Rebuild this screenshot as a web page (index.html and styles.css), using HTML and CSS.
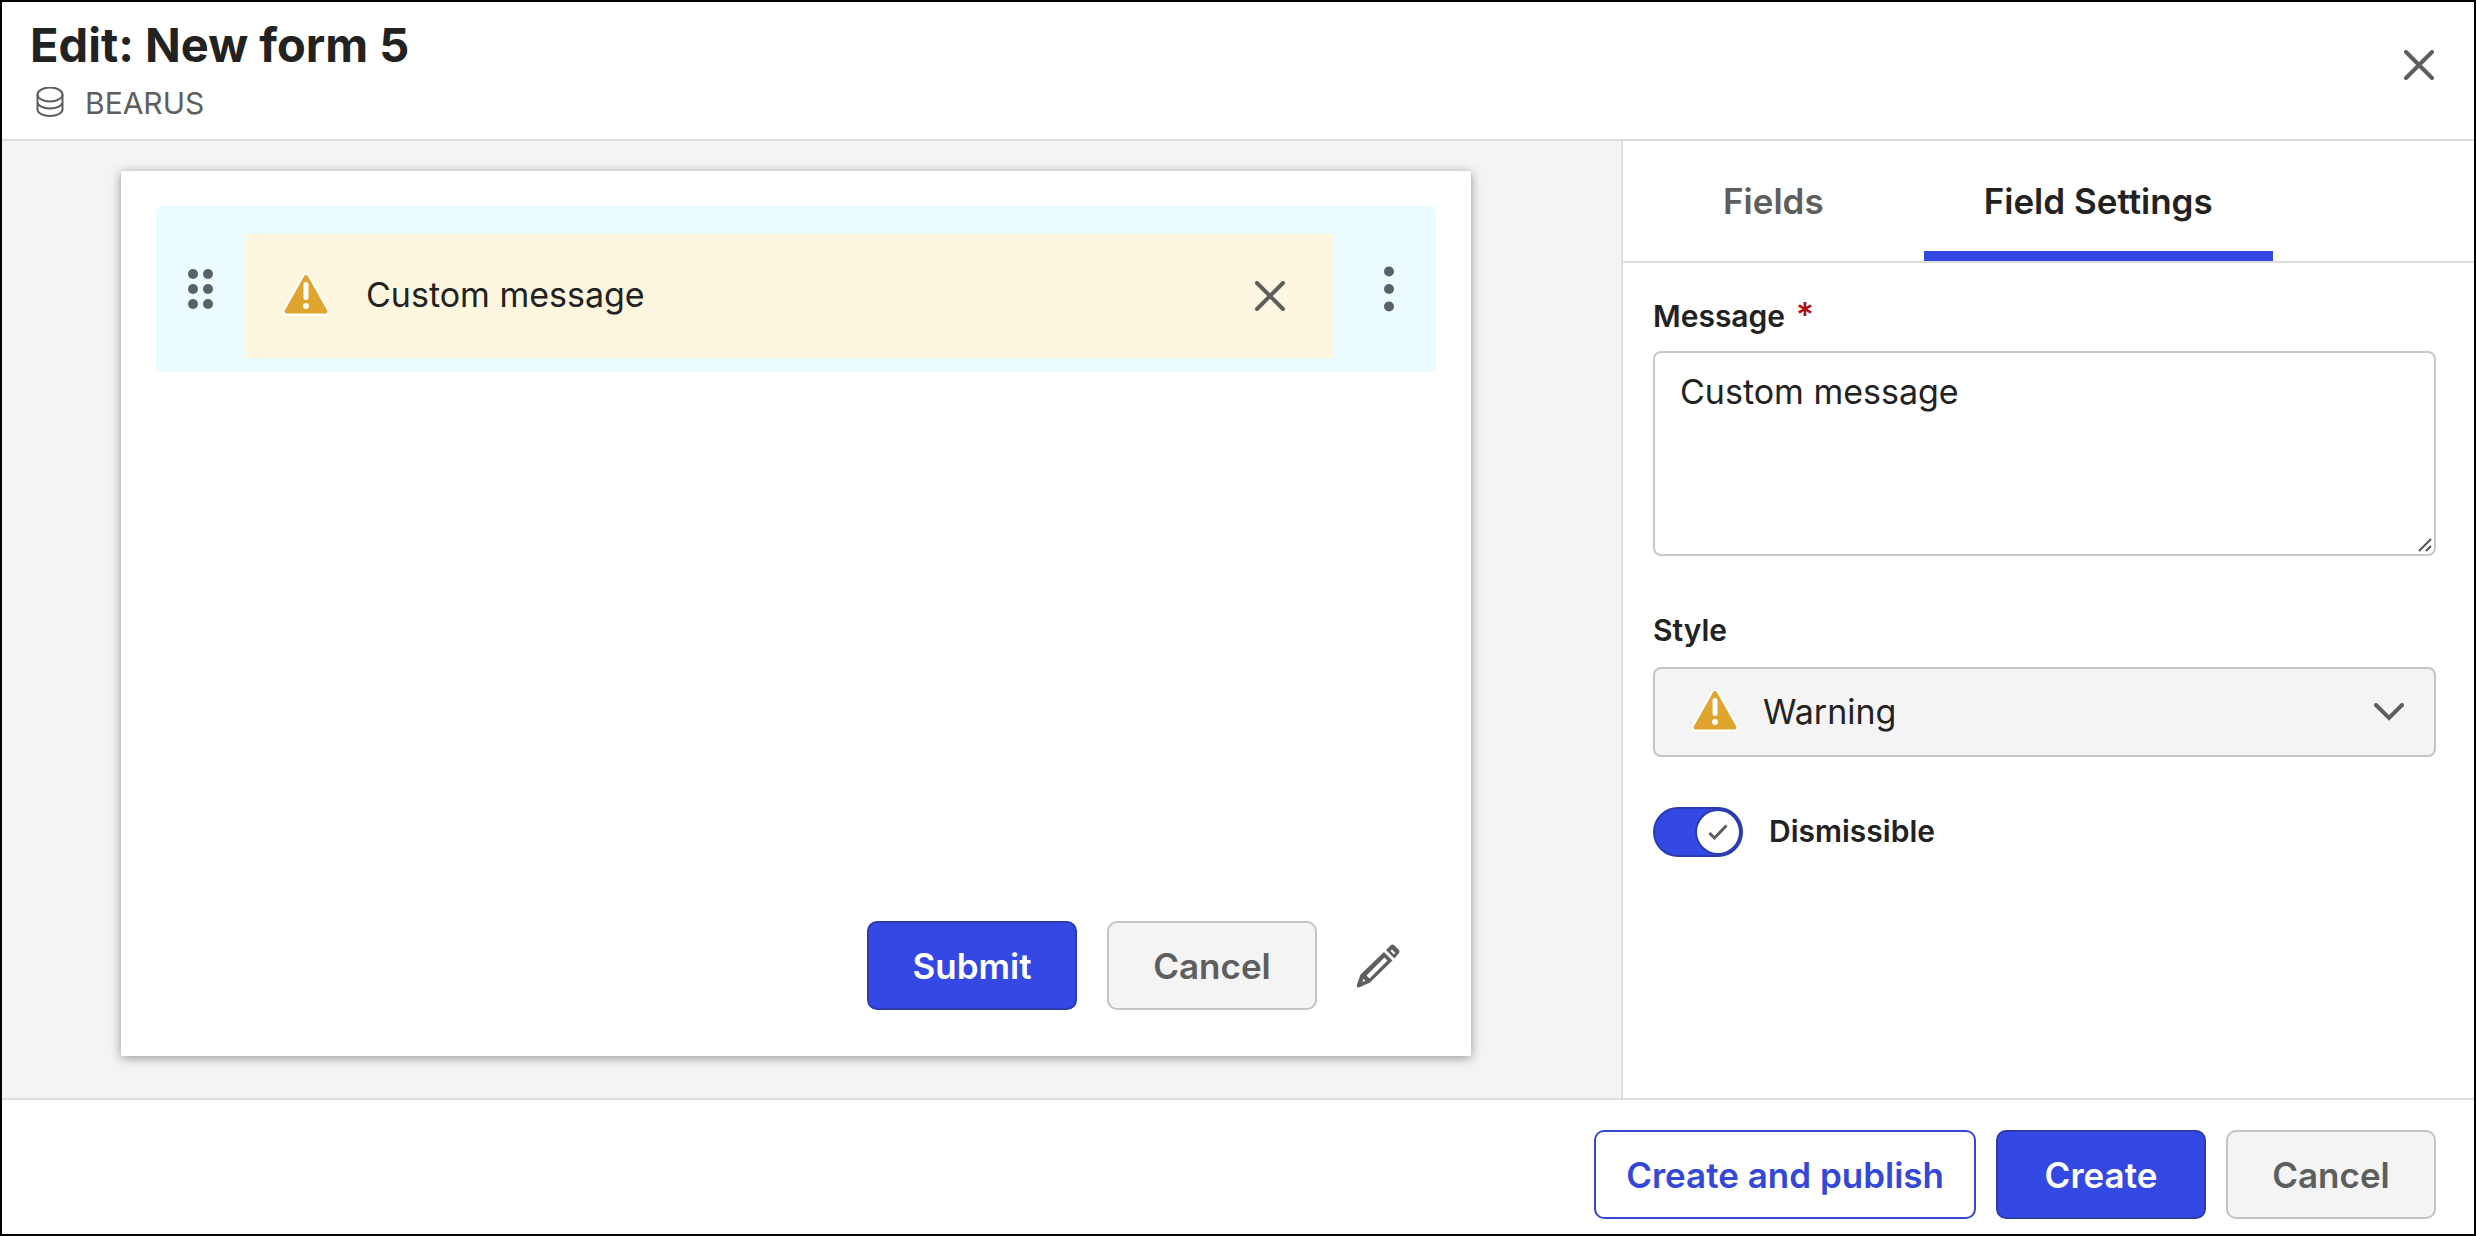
FILE: index.html
```html
<!DOCTYPE html>
<html lang="en">
<head>
<meta charset="utf-8">
<title>Edit: New form 5</title>
<link rel="stylesheet" href="styles.css">
</head>
<body>
<div class="dialog">
  <header class="header">
    <div class="heading">
      <h1 class="title">Edit: New form 5</h1>
      <p class="source">
        <svg class="source-icon" viewBox="0 0 28 32" aria-hidden="true"><ellipse cx="14" cy="7.500" rx="12.500" ry="7"/><path d="M1.500 7.500v15c0 3.600 5.600 6.500 12.500 6.500s12.500-2.900 12.500-6.500v-15M1.500 15c0 3.600 5.600 6.500 12.500 6.500s12.500-2.900 12.500-6.500"/></svg>
        <span>BEARUS</span>
      </p>
    </div>
    <button class="icon-button header-close" type="button" aria-label="Close"><svg class="icon-close" viewBox="0 0 30 30" aria-hidden="true"><path d="M2 2l26 26M28 2L2 28"/></svg></button>
  </header>

  <main class="main">
    <section class="canvas" aria-label="Form preview">
      <div class="card">
        <div class="field-row">
          <button class="icon-button" type="button" aria-label="Move field"><svg class="icon-grip" viewBox="0 0 26 42" aria-hidden="true"><circle cx="5" cy="6" r="5"/><circle cx="20" cy="6" r="5"/><circle cx="5" cy="21" r="5"/><circle cx="20" cy="21" r="5"/><circle cx="5" cy="36" r="5"/><circle cx="20" cy="36" r="5"/></svg></button>
          <div class="alert">
            <svg class="icon-warning" viewBox="0 0 48 44" aria-hidden="true"><path class="warning-halo" d="M24 3L43.500 37.500H4.500z"/><path class="warning-shape" d="M24 3L43.500 37.500H4.500z"/><path class="warning-mark" d="M24 10.500v13"/><circle class="warning-dot" cx="24" cy="32" r="3"/></svg>
            <span class="alert-text">Custom message</span>
            <button class="icon-button" type="button" aria-label="Dismiss"><svg class="icon-close" viewBox="0 0 30 30" aria-hidden="true"><path d="M2 2l26 26M28 2L2 28"/></svg></button>
          </div>
          <button class="icon-button" type="button" aria-label="Field actions"><svg class="icon-more" viewBox="0 0 10 46" aria-hidden="true"><circle cx="5" cy="5.500" r="5"/><circle cx="5" cy="23" r="5"/><circle cx="5" cy="40.500" r="5"/></svg></button>
        </div>
        <div class="card-actions">
          <button class="button button-primary" type="button">Submit</button>
          <button class="button button-secondary" type="button">Cancel</button>
          <button class="icon-button" type="button" aria-label="Edit buttons"><svg class="icon-pencil" viewBox="0 0 44 44" aria-hidden="true"><path fill-rule="evenodd" d="M28 8L36.500 16.500L14 38.500L4 43Q0 44.500 1 40.500L4.500 30.500zM28.500 13.500L10.500 31.500L13.500 34.500L31.500 16.500zM7.500 34.500L6.500 38L9.500 37z"/><path fill-rule="evenodd" d="M30 6L34.500 1.500Q36.500 -.5 38.500 1.500L42.500 5.500Q44.500 7.500 42.500 9.500L38.500 14.500zM36 5.500L34.500 7L38 10.500L39.500 9z"/></svg></button>
        </div>
      </div>
    </section>

    <aside class="panel">
      <div class="tabs" role="tablist">
        <button class="tab" type="button" role="tab" aria-selected="false">Fields</button>
        <button class="tab tab-active" type="button" role="tab" aria-selected="true">Field Settings</button>
      </div>
      <form class="settings">
        <div class="field">
          <label class="label" for="message">Message <span class="required">*</span></label>
          <div class="textarea-box">
            <textarea class="textarea" id="message" required>Custom message</textarea>
            <svg class="resize-mark" viewBox="0 0 14 14" aria-hidden="true"><path d="M1 13L13 1M8 13l5-5"/></svg>
          </div>
        </div>
        <div class="field">
          <label class="label" for="style">Style</label>
          <div class="select-box">
            <svg class="icon-warning" viewBox="0 0 48 44" aria-hidden="true"><path class="warning-halo" d="M24 3L43.500 37.500H4.500z"/><path class="warning-shape" d="M24 3L43.500 37.500H4.500z"/><path class="warning-mark" d="M24 10.500v13"/><circle class="warning-dot" cx="24" cy="32" r="3"/></svg>
            <select class="select" id="style"><option>Warning</option></select>
            <svg class="icon-chevron" viewBox="0 0 30 18" aria-hidden="true"><path d="M2 2l13 13L28 2"/></svg>
          </div>
        </div>
        <label class="switch-row">
          <span class="switch">
            <input class="switch-input" type="checkbox" role="switch" checked>
            <svg class="switch-check" viewBox="0 0 20 16" aria-hidden="true"><path d="M1.500 9l5 5L18.500 1.500"/></svg>
          </span>
          <span class="switch-label">Dismissible</span>
        </label>
      </form>
    </aside>
  </main>

  <footer class="footer">
    <button class="button button-outline" type="button">Create and publish</button>
    <button class="button button-primary" type="button">Create</button>
    <button class="button button-secondary" type="button">Cancel</button>
  </footer>
</div>
</body>
</html>
```
FILE: styles.css
```css
* {
  box-sizing: border-box;
}

body {
  margin: 0;
  font-family: Inter, "Liberation Sans", sans-serif;
  font-size: 34px;
  line-height: 44px;
  color: #222;
}

button,
select,
textarea {
  font: inherit;
  color: inherit;
  margin: 0;
}

svg {
  display: block;
  flex: none;
}

.dialog {
  display: flex;
  flex-direction: column;
  min-height: 100vh;
  border: 2px solid #000;
  background: #fff;
}

/* Header */

.header {
  display: flex;
  align-items: flex-start;
  justify-content: space-between;
  padding: 13px 40px 14px 28px;
  border-bottom: 2px solid #ddd;
}

.title {
  margin: 0;
  font-size: 47px;
  line-height: 60px;
  font-weight: 650;
}

.source {
  display: flex;
  align-items: center;
  gap: 21px;
  margin: 0;
  padding: 6px 0 0 6px;
  font-size: 30px;
  color: #5e5e5e;
}

.source-icon {
  width: 28px;
  height: 32px;
  fill: none;
  stroke: #5e5e5e;
  stroke-width: 2;
}

.icon-button {
  display: flex;
  flex: none;
  padding: 0;
  border: 0;
  background: none;
}

.header-close {
  margin-top: 35px;
}

.icon-close {
  width: 30px;
  height: 30px;
  fill: none;
  stroke: #5e5e5e;
  stroke-width: 4;
  stroke-linecap: round;
}

/* Form preview */

.main {
  display: flex;
  flex: 1;
}

.canvas {
  display: flex;
  flex: 1;
  padding: 30px 150px 42px 119px;
  background: #f4f4f4;
}

.card {
  display: flex;
  flex: 1;
  flex-direction: column;
  justify-content: space-between;
  padding: 35px 35px 46px;
  background: #fff;
  box-shadow: 0 2px 10px rgba(0, 0, 0, 0.4);
}

.field-row {
  display: flex;
  align-items: center;
  padding: 0 42px 0 32px;
  border-radius: 6px;
  background: #ecfbff;
}

.icon-grip {
  width: 26px;
  height: 42px;
  fill: #5a6265;
}

.icon-more {
  width: 10px;
  height: 46px;
  fill: #5a6265;
}

.alert {
  display: flex;
  flex: 1;
  align-items: center;
  margin: 28px 51px 14px 32px;
  padding: 39px 48px 39px 36px;
  background: #fdf6de;
}

.alert-text {
  flex: 1;
  padding: 0 0 2px 36px;
}

.icon-warning {
  width: 48px;
  height: 44px;
}

.warning-halo {
  fill: #fff;
  stroke: #fff;
  stroke-width: 8;
  stroke-linejoin: round;
}

.warning-shape {
  fill: #dfa52f;
  stroke: #dfa52f;
  stroke-width: 4;
  stroke-linejoin: round;
}

.warning-mark {
  stroke: #fff;
  stroke-width: 5;
  stroke-linecap: round;
}

.warning-dot {
  fill: #fff;
}

.card-actions {
  display: flex;
  align-items: center;
  justify-content: flex-end;
  gap: 30px;
  padding-right: 36px;
}

.icon-pencil {
  width: 44px;
  height: 44px;
  margin-left: 9px;
  fill: #5e5e5e;
}

.button {
  min-width: 210px;
  height: 89px;
  padding: 0 30px;
  border: 2px solid;
  border-radius: 10px;
  font-size: 35px;
  font-weight: 600;
}

.button-primary {
  border-color: #2b3bb0;
  background: #3448e4;
  color: #fff;
}

.button-secondary {
  border-color: #c4c4c4;
  background: #f4f4f4;
  color: #5e5e5e;
}

.button-outline {
  border-color: #3448d4;
  background: #fff;
  color: #3448d8;
}

/* Settings panel */

.panel {
  width: 853px;
  border-left: 2px solid #ddd;
}

.tabs {
  display: flex;
  gap: 40px;
  padding-left: 40px;
  border-bottom: 2px solid #ddd;
}

.tab {
  height: 120px;
  padding: 10px 60px 0;
  border: 0;
  border-bottom: 10px solid transparent;
  background: none;
  font-size: 35px;
  font-weight: 600;
  color: #5e5e5e;
}

.tab-active {
  border-color: #3448e4;
  color: #222;
}

.settings {
  display: flex;
  flex-direction: column;
  gap: 50px;
  padding: 32px 38px 32px 30px;
}

.field {
  display: flex;
  flex-direction: column;
  gap: 14px;
}

.field + .field {
  gap: 16px;
  margin-top: 3px;
}

.label,
.switch-label {
  font-size: 30px;
  line-height: 42px;
  font-weight: 600;
}

.switch-label {
  padding-bottom: 2px;
}

.required {
  margin-left: 3px;
  font-size: 34px;
  line-height: 1;
  color: #b01010;
}

.textarea-box {
  position: relative;
}

.textarea {
  display: block;
  width: 100%;
  height: 205px;
  padding: 17px 25px;
  border: 2px solid #c9c9c9;
  border-radius: 8px;
  outline: 0;
  background: #fff;
  resize: none;
}

.resize-mark {
  position: absolute;
  right: 4px;
  bottom: 4px;
  width: 14px;
  height: 14px;
  fill: none;
  stroke: #555;
  stroke-width: 2;
}

.select-box {
  display: grid;
  grid-template-columns: 36px 48px 1fr 30px 30px;
  align-items: center;
  height: 90px;
  border: 2px solid #c4c4c4;
  border-radius: 8px;
  background: #f4f4f4;
}

.select-box > * {
  grid-row: 1;
}

.select-box .icon-warning {
  grid-column: 2;
}

.select {
  grid-column: 1 / -1;
  height: 86px;
  padding: 0 0 0 108px;
  border: 0;
  appearance: none;
  background: none;
}

.icon-chevron {
  grid-column: 4;
  width: 30px;
  height: 18px;
  fill: none;
  stroke: #5e5e5e;
  stroke-width: 4;
  stroke-linecap: round;
}

.switch-row {
  display: flex;
  align-items: center;
  gap: 26px;
}

.switch {
  display: grid;
  grid-template-columns: 55px 20px 15px;
  align-items: center;
}

.switch > * {
  grid-row: 1;
}

.switch-input {
  display: grid;
  grid-column: 1 / -1;
  justify-content: end;
  align-items: center;
  width: 90px;
  height: 50px;
  margin: 0;
  padding-right: 2px;
  border: 2px solid #2b3bb0;
  border-radius: 25px;
  appearance: none;
  background: #3448e4;
}

.switch-input::before {
  content: "";
  width: 42px;
  height: 42px;
  border-radius: 50%;
  background: #fff;
  box-shadow: 0 0 0 2px #2b3bb0;
}

.switch-check {
  grid-column: 2;
  width: 20px;
  height: 16px;
  fill: none;
  stroke: #5e5e5e;
  stroke-width: 3;
  z-index: 1;
}

/* Footer */

.footer {
  display: flex;
  justify-content: flex-end;
  gap: 20px;
  padding: 30px 38px 15px;
  border-top: 2px solid #ddd;
}
```
